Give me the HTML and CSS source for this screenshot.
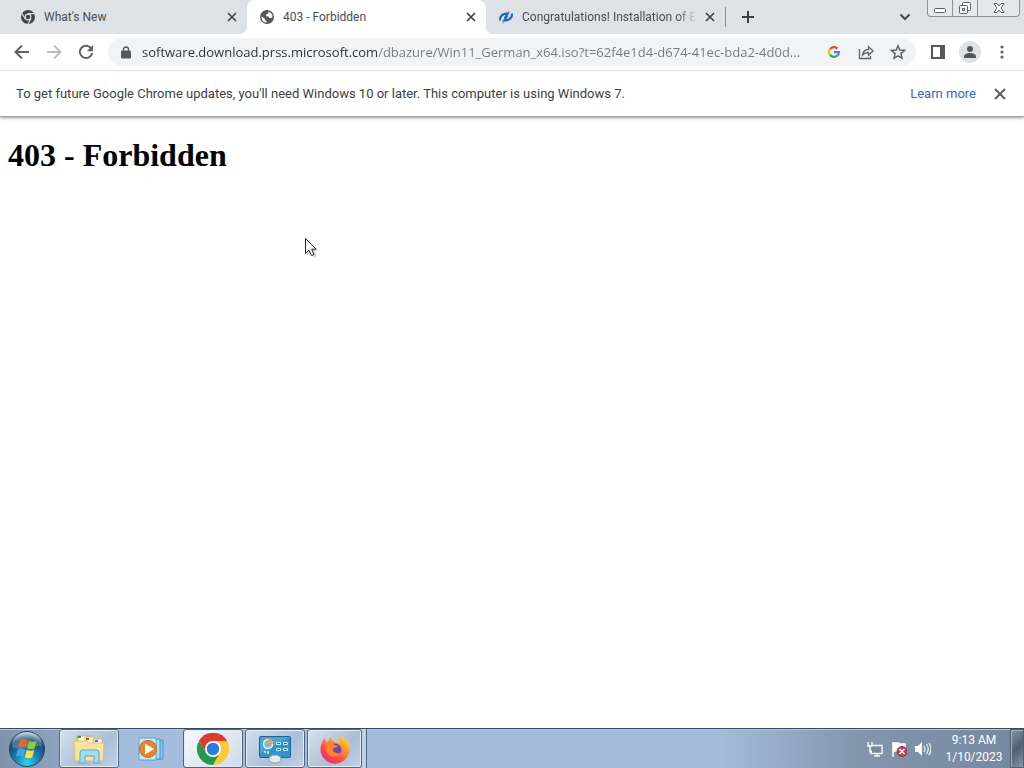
FILE: index.html
```html
<!DOCTYPE html>
<html lang="en">
<head>
<meta charset="utf-8">
<meta name="viewport" content="width=device-width, initial-scale=1">
<title>403 - Forbidden</title>
<link rel="stylesheet" href="styles.css">
</head>
<body>
<div class="desktop">
  <header class="browser">
    <div class="tabstrip">
      <div class="tabs" role="tablist">
        <div class="tab">
          <svg class="favicon" viewBox="0 0 16 16"><circle cx="8" cy="8" r="8" fill="#3f4449"/><circle cx="8" cy="8" r="3.9" fill="#dee1e6"/><circle cx="8" cy="8" r="2.6" fill="#3f4449"/><path d="M8 4.1h7M4.6 10 1.2 4M11.4 10 7.8 16" stroke="#dee1e6" stroke-width="1.3" fill="none"/></svg>
          <button class="tab-title" role="tab">What's New</button>
          <button class="close" aria-label="Close tab"><svg viewBox="0 0 10 10"><path d="m1 1 8 8M9 1 1 9"/></svg></button>
        </div>
        <div class="tab active">
          <svg class="favicon" viewBox="0 0 16 16"><circle cx="8" cy="8" r="8" fill="#54575b"/><path d="M9.7 1.8 9.4 4 7 5v2.200l2.700.3.8 1.600 3.500-.2.2-2.600-1.500-2.600zM1.800 7l3.800 3.400v1.300l1.800.5v2H5.800A6.600 6.600 0 0 1 1.800 7z" fill="#fff"/></svg>
          <button class="tab-title" role="tab" aria-selected="true">403 - Forbidden</button>
          <button class="close" aria-label="Close tab"><svg viewBox="0 0 10 10"><path d="m1 1 8 8M9 1 1 9"/></svg></button>
        </div>
        <div class="tab last">
          <svg class="favicon" viewBox="0 0 16 16"><path d="m11.500.5-1 3.500M5.500 12l-1 3.500" stroke="#eda35b" stroke-width="2"/><path d="M1 12C1 7 4 4 10 4L6.500 9.500M15 4c0 5-3 8-9 8l3.500-5.500" fill="none" stroke="#1769c8" stroke-width="2.400"/></svg>
          <button class="tab-title" role="tab">Congratulations! Installation of E</button>
          <button class="close" aria-label="Close tab"><svg viewBox="0 0 10 10"><path d="m1 1 8 8M9 1 1 9"/></svg></button>
        </div>
      </div>
      <button class="new-tab" aria-label="New tab"><svg width="12" height="12" viewBox="0 0 12 12"><path d="M6 0v12M0 6h12" stroke="#3c4043" stroke-width="2"/></svg></button>
      <button class="tab-search" aria-label="Search tabs"><svg width="12" height="8" viewBox="0 0 12 8"><path d="m1.500 1.500 4.500 4.500 4.500-4.500" fill="none" stroke="#45494d" stroke-width="2"/></svg></button>
      <div class="window-controls">
        <button aria-label="Minimize"><svg width="14" height="16" viewBox="0 0 14 16"><rect x="1.500" y="8.500" width="11" height="4" rx="1" fill="#fff" stroke="#5a6069"/></svg></button>
        <button aria-label="Restore"><svg width="14" height="16" viewBox="0 0 14 16"><g fill="#f5f6f8" stroke="#5a6069"><rect x="4.500" y="2.500" width="8" height="8" rx="1"/><rect x="1.500" y="5.500" width="8" height="8" rx="1"/><rect x="4.500" y="8.500" width="2" height="2"/></g></svg></button>
        <button class="wide" aria-label="Close"><svg width="14" height="16" viewBox="0 0 14 16"><path d="M2 3.500h3L7 6l2-2.500h3L9 8l3 4.500H9L7 10l-2 2.500H2L5 8z" fill="#fff" stroke="#5a6069"/></svg></button>
      </div>
    </div>
    <div class="toolbar">
      <button class="tool" aria-label="Back"><svg width="16" height="16" viewBox="0 0 16 16"><path d="M15 8H2M8 1.500 1.500 8 8 14.500" class="line"/></svg></button>
      <button class="tool muted" aria-label="Forward"><svg width="16" height="16" viewBox="0 0 16 16"><path d="M1 8h13M8 1.500 14.500 8 8 14.500" class="line"/></svg></button>
      <button class="tool" aria-label="Reload"><svg width="16" height="16" viewBox="0 0 16 16"><path d="M13.300 4.500A6.200 6.200 0 1 0 14.200 9" class="line"/><path d="M15 1v6.200H8.800z" fill="#5f6368"/></svg></button>
      <form class="omnibox">
        <button type="button" class="lock" aria-label="View site information"><svg width="10" height="13" viewBox="0 0 10 13"><path d="M2.500 5V3.500a2.500 2.500 0 0 1 5 0V5" fill="none" stroke="#55595e" stroke-width="1.400"/><rect y="4.500" width="10" height="8" rx="1" fill="#55595e"/></svg></button>
        <input class="url" type="text" aria-label="Address and search bar" value="software.download.prss.microsoft.com/dbazure/Win11_German_x64.iso?t=62f4e1d4-d674-41ec-bda2-4d0d...">
        <button type="button" class="tool" aria-label="Search with Google"><svg width="12" height="12" viewBox="0 0 24 24"><g fill="none" stroke-width="4.500"><path d="M4.200 6.300A9.700 9.700 0 0 1 18.900 5.200" stroke="#ea4335"/><path d="M4 17.500a9.700 9.700 0 0 1 .2-11.200" stroke="#fbbc05"/><path d="M18.600 19A9.700 9.700 0 0 1 4 17.500" stroke="#34a853"/><path d="M12 12h9.700c0 3-1 5.400-3.100 7" stroke="#4285f4"/></g></svg></button>
        <button type="button" class="tool" aria-label="Share"><svg width="16" height="16" viewBox="0 0 16 16"><path d="M1.500 5v9.500h11V12M4.500 11c.5-3.500 2.500-5.500 6-5.500v-3L15 7l-4.500 4.200V8.500c-2.600 0-4.500.7-6 2.500z" fill="none" stroke="#5f6368" stroke-width="1.300"/></svg></button>
        <button type="button" class="tool" aria-label="Bookmark this tab"><svg width="16" height="16" viewBox="0 0 16 16"><path d="m8 1.800 1.800 4.300 4.700.4-3.600 3.100 1.100 4.600L8 11.800l-4 2.400 1.100-4.600-3.600-3.100 4.700-.4z" fill="none" stroke="#5f6368" stroke-width="1.500"/></svg></button>
      </form>
      <button class="tool" aria-label="Side panel"><svg width="14" height="14" viewBox="0 0 14 14"><path d="M1 1h12v12H1z" fill="none" stroke="#55595e" stroke-width="2"/><path d="M9 0h5v14H9z" fill="#55595e"/></svg></button>
      <button class="tool" aria-label="Profile"><svg width="22" height="22" viewBox="0 0 22 22"><circle cx="11" cy="11" r="11" fill="#dee1e6"/><circle cx="11" cy="8" r="3" fill="#50565e"/><path d="M5 17v-1.500c0-2.200 3-3.500 6-3.500s6 1.300 6 3.500V17z" fill="#50565e"/></svg></button>
      <button class="tool" aria-label="Menu"><svg width="4" height="14" viewBox="0 0 4 14"><g fill="#5f6368"><circle cx="2" cy="2" r="1.600"/><circle cx="2" cy="7" r="1.600"/><circle cx="2" cy="12" r="1.600"/></g></svg></button>
    </div>
    <div class="infobar">
      <span class="message">To get future Google Chrome updates, you'll need Windows 10 or later. This computer is using Windows 7.</span>
      <a href="#">Learn more</a>
      <button class="dismiss" aria-label="Dismiss"><svg width="12" height="12" viewBox="0 0 12 12"><path d="m1 1 10 10M11 1 1 11" stroke="#55595e" stroke-width="1.800"/></svg></button>
    </div>
  </header>
  <main class="page">
    <h1>403 - Forbidden</h1>
    <svg class="cursor" width="14" height="22" viewBox="0 0 14 22"><path d="M3 3v16l4-3 3 5 3-2-2-5h3z" fill="#999" opacity=".35"/><path d="M1.500 1.500v15l3.500-3.300 2.500 5.300 2.500-1-2.300-5.300h4.500z" fill="#fff" stroke="#222"/></svg>
  </main>
  <footer class="taskbar">
    <button class="start" aria-label="Start">
      <svg width="38" height="38" viewBox="0 0 38 38"><defs><radialGradient id="orb" cx=".5" cy=".9" r=".85"><stop offset="0" stop-color="#35d2f0"/><stop offset=".45" stop-color="#1878ac"/><stop offset=".8" stop-color="#17496f"/><stop offset="1" stop-color="#a2bfd0"/></radialGradient></defs><circle cx="19" cy="19" r="17.500" fill="url(#orb)" stroke="#224763"/><path d="M4 17a15 15 0 0 1 30 0c-8-4-20 4-30 0z" fill="#fff" opacity=".22"/><path d="M12 10c3-1.500 5-1 7.500.3l-1.800 7.500c-2.500-1.500-5-1.500-7.500-.5z" fill="#ed642d"/><path d="M20.800 11c2.500 1.300 5 1.200 7.700 0l-1.900 7.500c-2.500 1-5 .9-7.500-.3z" fill="#91c83e"/><path d="M9.900 18.800c2.500-1 5-.8 7.400.4L15.500 27c-2.500-1.500-5-1.400-7.500-.4z" fill="#43a6e8"/><path d="M18.700 19.700c2.500 1.200 5 1.300 7.500.3l-1.900 7.600c-2.500 1-5 .8-7.400-.3z" fill="#ffdc4c"/></svg>
    </button>
    <nav class="apps" aria-label="Taskbar">
      <button class="app open" aria-label="File Explorer"><svg width="36" height="32" viewBox="0 0 36 32"><path d="M5 4 7 2h11l2 3h11v22H5z" fill="#d8b858"/><path d="M7 3h9v8H7zM14 4h9v8h-9zM22 6h9v8h-9z" fill="#fbfaf1" stroke="#d5c073"/><path d="M7 3h3v2H7z" fill="#2c9544"/><path d="M15 5h3v2h-3z" fill="#cc4332"/><path d="M24 7h3v2h-3z" fill="#377cc5"/><path d="M3 8h13l3 2h14l-1 18H4z" fill="#f6e59a" stroke="#ddc36c"/><path d="M9 30V20q0-3 3-3h13q3 0 3 3v10h-5v-7h-9v7z" fill="#a9dcf3" stroke="#56a5cf"/><path d="M7 30h9M22 30h8" stroke="#80bddb" stroke-width="2"/></svg></button>
      <button class="app" aria-label="Media Player"><svg width="28" height="28" viewBox="0 0 28 28"><path d="M10 5h16v19l-12 1z" fill="#87c3e7" stroke="#4b9acd"/><path d="M6 4h17v20H6z" fill="#a5daf2" stroke="#4b9acd"/><path d="M2 3h17v22H2z" fill="#c5e8f5" stroke="#58a4d0"/><circle cx="11" cy="14" r="8.500" fill="#ec8329" stroke="#c8691c"/><path d="M8 8.500v11l9-5.500z" fill="#fff"/></svg></button>
      <button class="app open bright" aria-label="Google Chrome"><svg width="32" height="32" viewBox="0 0 32 32"><path d="M16 16 2.100 8a16 16 0 0 1 27.800 0z" fill="#dc3b30"/><path d="M16 16V8h13.900A16 16 0 0 1 16 32l6.900-12z" fill="#fbcb31"/><path d="m16 16-6.900 4-7-12A16 16 0 0 0 16 32l6.900-12z" fill="#269a4b"/><path d="M16 8h13.900A16 16 0 0 0 2.100 8l7 12z" fill="#dc3b30"/><circle cx="16" cy="16" r="8" fill="#fff"/><circle cx="16" cy="16" r="6.200" fill="#297ce0"/></svg></button>
      <button class="app open" aria-label="Control Panel"><svg width="34" height="30" viewBox="0 0 34 30"><rect x="1.500" y="2.500" width="31" height="21" rx="1" fill="#3193cd" stroke="#215f91"/><path d="M2 3h30L2 20z" fill="#62b8e3" opacity=".5"/><circle cx="10" cy="10" r="4.500" fill="#79bce0" stroke="#eef8fc" stroke-width="1.500"/><path d="M10 10V4a6 6 0 0 1 5 6z" fill="#f2a33b"/><path d="M18.500 8.500h4v2h-4zM25.500 8.500h4v2h-4zM18.500 14.500h4v2h-4zM25.500 14.500h4v2h-4z" fill="#1870b1" stroke="#c8eafb"/><path d="M7 17v2M10 17v3" stroke="#f9cd60" stroke-width="2"/><ellipse cx="17" cy="25" rx="6" ry="4" fill="#e6e9eb" stroke="#989fa5"/></svg></button>
      <button class="app open stacked" aria-label="Firefox"><svg width="32" height="32" viewBox="0 0 32 32"><defs><linearGradient id="flame" x1="1" y1="0" x2=".25" y2="1"><stop stop-color="#fff044"/><stop offset=".4" stop-color="#ff9b25"/><stop offset=".75" stop-color="#ff4745"/><stop offset="1" stop-color="#e62d80"/></linearGradient></defs><path d="M20 1c5 3 5 6 7 8l1-3c3 4 4 9 2 14a14.500 14.500 0 0 1-28 0C.500 14 3 8 6 5l1 4 3-1 1-4 4 5 6 1c0-4-2-5-1-9z" fill="url(#flame)"/><circle cx="16" cy="17" r="6.500" fill="#7544b5"/><path d="M6 10c4-2 7-1 9 2l4 1c-1 2-4 1-5 3-1 3 4 5 8 4-3 5-11 5-14 0-2-3-2-6-2-10z" fill="#ff8427"/></svg></button>
      <span class="stack-edge"></span>
    </nav>
    <div class="tray">
      <button aria-label="Network"><svg width="16" height="16" viewBox="0 0 16 16"><path d="M5 4.500h10v8H4V9M7 15h6M10 12v3" fill="#76889e" stroke="#f6f8fa" stroke-width="1.400"/><path d="M1 1v4h4V1M3 5v6h2" fill="none" stroke="#fff" stroke-width="1.400"/></svg></button>
      <button aria-label="Action Center"><svg width="16" height="16" viewBox="0 0 16 16"><path d="M2 1v15M3 2h4l2 1h5v7H3z" fill="#fff" stroke="#fff" stroke-width="1.500"/><circle cx="11" cy="10.500" r="5" fill="#c93e49" stroke="#8b3441"/><path d="m8.500 8 5 5m0-5-5 5" stroke="#fff" stroke-width="1.500"/></svg></button>
      <button aria-label="Volume"><svg width="16" height="16" viewBox="0 0 16 16"><path d="M0 5h3l4-4v14l-4-4H0z" fill="#f7f9fa"/><path d="M9 5q2 3 0 6M11.500 3q3.500 5 0 10M14 2q4 6 0 12" fill="none" stroke="#eef2f5" stroke-width="1.200"/></svg></button>
      <button class="clock"><span>9:13 AM</span><span>1/10/2023</span></button>
    </div>
    <button class="show-desktop" aria-label="Show desktop"></button>
  </footer>
</div>
</body>
</html>
```

FILE: styles.css
```css
* { box-sizing: border-box; }
body { margin: 0; background: #fff; font-family: Roboto, "Noto Sans", sans-serif; font-size: 12px; color: #3c4043; }
button { border: 0; padding: 0; background: none; font: inherit; color: inherit; }
svg { display: block; flex: none; }
.desktop { min-height: 100vh; display: flex; flex-direction: column; }
.browser { box-shadow: 0 1px 3px #999; border-bottom: 1px solid #a7a7a7; }

.tabstrip { display: flex; align-items: flex-start; height: 34px; padding: 0 4px 0 8px; background: #dee1e6; }
.tabs { display: flex; flex: 0 1 717px; min-width: 0; }
.tab { display: flex; flex: 1 1 0; min-width: 0; align-items: center; height: 34px; padding: 0 10px 0 13px; }
.tab.active { position: relative; background: #fff; border-radius: 8px 8px 0 0; }
.tab.active::before, .tab.active::after { content: ""; position: absolute; bottom: 0; width: 8px; height: 8px; }
.tab.active::before { left: -8px; background: radial-gradient(circle at 0 0, transparent 8px, #fff 8px); }
.tab.active::after { right: -8px; background: radial-gradient(circle at 100% 0, transparent 8px, #fff 8px); }
.favicon { width: 14px; height: 14px; }
.tab-title { flex: 1; min-width: 0; margin-left: 9px; text-align: left; white-space: nowrap; overflow: hidden; color: #4a4e52; }
.last .tab-title { mask-image: linear-gradient(to right, #000 calc(100% - 20px), transparent); }
.close { width: 10px; margin-left: 8px; }
.close svg { width: 10px; height: 10px; stroke: #3c4043; stroke-width: 1.6; }
.new-tab { height: 20px; margin-top: 7px; padding: 0 16px; border-left: 1px solid #8a8d91; }
.tab-search { height: 34px; margin-left: auto; margin-right: 16px; }
.window-controls { display: flex; height: 17px; border: 1px solid #8c9199; border-top: 0; border-radius: 0 0 4px 4px; background: #e4e7eb; }
.window-controls button { display: flex; justify-content: center; width: 25px; border-right: 1px solid #8c9199; }
.window-controls .wide { width: 41px; border-right: 0; }

.toolbar { display: flex; align-items: center; height: 37px; padding: 0 6px; border-bottom: 1px solid #dcdee1; background: #fff; }
.tool { display: flex; flex: none; align-items: center; justify-content: center; width: 32px; height: 28px; }
.line { fill: none; stroke: #5f6368; stroke-width: 2; }
.muted .line { stroke: #bbbdc0; }
.omnibox { display: flex; flex: 1; min-width: 0; align-items: center; height: 28px; margin: 0 6px; padding: 0 2px 0 13px; border-radius: 14px; background: #f1f3f4; }
.url { flex: 1; min-width: 0; margin: 0 4px 0 11px; padding: 0; border: 0; outline: 0; font: 13px "Open Sans", sans-serif; color: transparent; background: linear-gradient(to right, #2d3034 235px, #75797e 235px); background-clip: text; -webkit-background-clip: text; }

.infobar { display: flex; align-items: center; height: 45px; padding: 0 18px 0 16px; background: #fff; font-size: 13px; }
.message { flex: 1; white-space: nowrap; }
.infobar a { color: #3367c8; text-decoration: none; }
.dismiss { margin-left: 18px; }

.page { position: relative; flex: 1; padding: 0 8px; font-family: "Liberation Serif", serif; color: #000; }
h1 { margin: 20px 0; font-size: 32px; line-height: 36px; }
.cursor { position: absolute; left: 304px; top: 120px; }

.taskbar { display: flex; align-items: stretch; height: 40px; border-top: 1px solid #364a5e; background: linear-gradient(to right, #8192ab 0, #8fa2bf 60px, #a4bddc 120px, #a4bddc 70%, #8395ad 84%, #76889f); box-shadow: inset 0 1px #b9c9dc; }
.start { width: 54px; margin-right: 5px; padding-left: 8px; }
.apps { display: flex; gap: 2px; }
.app { display: flex; align-items: center; justify-content: center; width: 60px; border-radius: 3px; }
.app.open { border: 1px solid #4e657f; background: linear-gradient(135deg, #d4e0ef, #aabfd9 60%, #c0d1e6); box-shadow: inset 0 0 0 1px #e5edf7; }
.app.bright { background: linear-gradient(135deg, #f7f9fc, #cfdae9); }
.app.stacked { width: 55px; }
.stack-edge { width: 5px; margin-left: -2px; border-right: 1px solid #4e657f; background: #c3d3e7; }
.tray { display: flex; align-items: center; gap: 8px; margin-left: auto; color: #fff; }
.clock { display: flex; flex-direction: column; align-items: center; width: 70px; line-height: 17px; }
.show-desktop { width: 14px; margin-left: 1px; border: 1px solid #4f6176; background: linear-gradient(135deg, #8998aa, #4e6075 50%, #8696aa); box-shadow: inset 1px 1px #a2afbf; }
```
